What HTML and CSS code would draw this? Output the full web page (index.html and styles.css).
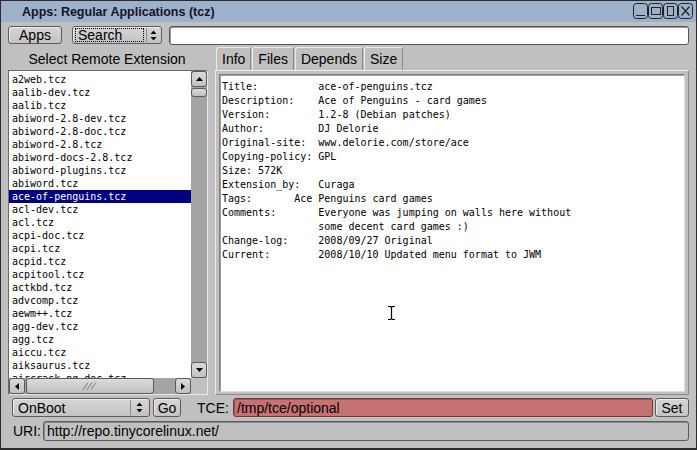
FILE: index.html
```html
<!DOCTYPE html>
<html>
<head>
<meta charset="utf-8">
<link rel="stylesheet" href="styles.css">
</head>
<body>
<div class="window">
  <div class="titlebar">
    <span class="title">Apps: Regular Applications (tcz)</span>
    <svg class="wbtns" width="61" height="16" viewBox="0 0 61 16">
      <g fill="none" stroke="#222" stroke-width="1">
        <rect x="0.5" y="0.5" width="14" height="15" rx="3"/>
        <rect x="15.5" y="0.5" width="14" height="15" rx="3"/>
        <rect x="30.5" y="0.5" width="14" height="15" rx="3"/>
        <rect x="45.5" y="0.5" width="14" height="15" rx="3"/>
        <path d="M3 12.5H12"/>
        <rect x="18.5" y="4.5" width="9" height="7"/>
        <rect x="34.5" y="3.5" width="6" height="9"/>
        <path d="M48.5 3.5L56.5 12.5M56.5 3.5L48.5 12.5" stroke-width="1.2"/>
      </g>
    </svg>
  </div>
  <div class="content">
    <div class="toolbar">
      <div class="btn apps-btn">Apps</div>
      <div class="choice search-choice">
        <span class="choice-label focused">Search</span>
        <span class="choice-arrows"><svg width="7" height="11" viewBox="0 0 7 11"><path d="M3.5 0.5L6.5 4H0.5Z M3.5 10.5L6.5 7H0.5Z" fill="#000"/></svg></span>
      </div>
      <div class="field search-field"></div>
    </div>
    <div class="mainrow">
      <div class="leftcol">
        <div class="list-label">Select Remote Extension</div>
        <div class="listbox">
          <div class="list-top">
            <div class="items">
              <div class="item">a2web.tcz</div>
              <div class="item">aalib-dev.tcz</div>
              <div class="item">aalib.tcz</div>
              <div class="item">abiword-2.8-dev.tcz</div>
              <div class="item">abiword-2.8-doc.tcz</div>
              <div class="item">abiword-2.8.tcz</div>
              <div class="item">abiword-docs-2.8.tcz</div>
              <div class="item">abiword-plugins.tcz</div>
              <div class="item">abiword.tcz</div>
              <div class="item selected">ace-of-penguins.tcz</div>
              <div class="item">acl-dev.tcz</div>
              <div class="item">acl.tcz</div>
              <div class="item">acpi-doc.tcz</div>
              <div class="item">acpi.tcz</div>
              <div class="item">acpid.tcz</div>
              <div class="item">acpitool.tcz</div>
              <div class="item">actkbd.tcz</div>
              <div class="item">advcomp.tcz</div>
              <div class="item">aewm++.tcz</div>
              <div class="item">agg-dev.tcz</div>
              <div class="item">agg.tcz</div>
              <div class="item">aiccu.tcz</div>
              <div class="item">aiksaurus.tcz</div>
              <div class="item">aircrack-ng-doc.tcz</div>
            </div>
            <div class="vscroll">
              <div class="sbtn"><svg width="9" height="6" viewBox="0 0 9 6"><path d="M4.5 1L8 5H1Z" fill="#000"/></svg></div>
              <div class="vthumb"></div>
              <div class="vtrough"></div>
              <div class="sbtn"><svg width="9" height="6" viewBox="0 0 9 6"><path d="M4.5 5L8 1H1Z" fill="#000"/></svg></div>
            </div>
          </div>
          <div class="list-bottom">
            <div class="hscroll">
              <div class="sbtn"><svg width="6" height="9" viewBox="0 0 6 9"><path d="M1 4.5L5 1V8Z" fill="#000"/></svg></div>
              <div class="hthumb"><svg width="16" height="8" viewBox="0 0 16 8"><path d="M1 7.5L6 0.5M5 7.5L10 0.5M9 7.5L14 0.5" stroke="#777" stroke-width="1" fill="none"/></svg></div>
              <div class="htrough"></div>
              <div class="sbtn"><svg width="6" height="9" viewBox="0 0 6 9"><path d="M5 4.5L1 1V8Z" fill="#000"/></svg></div>
            </div>
            <div class="corner"></div>
          </div>
        </div>
      </div>
      <div class="rightcol">
        <div class="tabs">
          <div class="tab active">Info</div>
          <div class="tab">Files</div>
          <div class="tab">Depends</div>
          <div class="tab">Size</div>
        </div>
        <div class="panel">
          <pre class="info">Title:          ace-of-penguins.tcz
Description:    Ace of Penguins - card games
Version:        1.2-8 (Debian patches)
Author:         DJ Delorie
Original-site:  www.delorie.com/store/ace
Copying-policy: GPL
Size: 572K
Extension_by:   Curaga
Tags:       Ace Penguins card games
Comments:       Everyone was jumping on walls here without
                some decent card games :)
Change-log:     2008/09/27 Original
Current:        2008/10/10 Updated menu format to JWM</pre>
        </div>
      </div>
    </div>
    <div class="row3">
      <div class="choice onboot-choice">
        <span class="choice-label">OnBoot</span>
        <span class="choice-arrows"><svg width="7" height="11" viewBox="0 0 7 11"><path d="M3.5 0.5L6.5 4H0.5Z M3.5 10.5L6.5 7H0.5Z" fill="#000"/></svg></span>
      </div>
      <div class="btn go-btn">Go</div>
      <span class="lbl tce-lbl">TCE:</span>
      <div class="field tce-field">/tmp/tce/optional</div>
      <div class="btn set-btn">Set</div>
    </div>
    <div class="row4">
      <span class="lbl uri-lbl">URI:</span>
      <div class="field uri-field">http://repo.tinycorelinux.net/</div>
    </div>
  </div>
  <svg class="ibeam" width="9" height="16" viewBox="0 0 9 16"><path d="M1 1.5H3.5L4.5 2.5L5.5 1.5H8M4.5 2.5V13.5M1 14.5H3.5L4.5 13.5L5.5 14.5H8" stroke="#000" stroke-width="1.2" fill="none"/></svg>
</div>
</body>
</html>
```

FILE: styles.css
```css
* { box-sizing: border-box; }
html, body { margin: 0; padding: 0; background: #c0c0c0; }
.window {
  position: relative;
  width: 697px;
  height: 450px;
  border: 1px solid #2c2c2c;
  border-bottom-width: 2px;
  background: #c0c0c0;
  font-family: "Liberation Sans", Arial, sans-serif;
  font-size: 14px;
  color: #000;
  overflow: hidden;
}
.titlebar {
  position: relative;
  height: 21px;
  background: #9db1ca;
  display: flex;
  align-items: center;
  padding-left: 21px;
}
.title {
  font-weight: bold;
  font-size: 12.5px;
  color: #141428;
  letter-spacing: 0;
}
.wbtns { position: absolute; left: 632px; top: 2px; }
.content {
  padding: 4px 7px 0 7px;
  display: flex;
  flex-direction: column;
}
.toolbar { display: flex; height: 18px; }
.btn {
  display: flex;
  align-items: center;
  justify-content: center;
  background: linear-gradient(#d6d6d6, #c3c3c3);
  border: 1px solid #5c5c5c;
  border-radius: 3px;
  box-shadow: inset 1px 1px #ececec;
  line-height: 1;
}
.apps-btn { width: 54px; }
.choice {
  display: flex;
  align-items: center;
  background: linear-gradient(#d6d6d6, #c3c3c3);
  border: 1px solid #5c5c5c;
  border-radius: 3px;
  box-shadow: inset 1px 1px #ececec;
  line-height: 1;
}
.search-choice { width: 90px; margin-left: 10px; padding: 1px 2px; }
.search-choice .choice-label {
  flex: 1;
  height: 14px;
  padding-left: 2px;
  display: flex;
  align-items: center;
  border: 1px dotted #000;
  margin-right: 2px;
}
.choice-arrows {
  display: flex;
  align-items: center;
  justify-content: center;
  width: 13px;
  height: 100%;
  border-left: 1px solid #8a8a8a;
}
.field {
  background: #fff;
  border: 1px solid #555;
  border-radius: 3px;
  box-shadow: inset 1px 1px #9a9a9a;
  display: flex;
  align-items: center;
  line-height: 1;
}
.search-field { flex: 1; margin-left: 7px; height: 19px; }
.mainrow { display: flex; margin-top: 3px; height: 348px; gap: 7px; }
.leftcol { width: 200px; display: flex; flex-direction: column; }
.list-label { height: 23px; display: flex; align-items: center; justify-content: center; padding-right: 2px; }
.listbox {
  height: 325px;
  border: 1px solid #6a6a6a;
  border-right-color: #e8e8e8;
  border-bottom-color: #e8e8e8;
  display: flex;
  flex-direction: column;
}
.list-top { display: flex; height: 307px; }
.items {
  width: 182px;
  background: #fff;
  overflow: hidden;
  padding-top: 2px;
  font-family: "DejaVu Sans Mono", monospace;
  font-size: 10px;
}
.item { height: 13px; line-height: 13px; padding-left: 3px; white-space: pre; }
.item.selected { background: #000080; color: #fff; }
.vscroll { width: 16px; display: flex; flex-direction: column; background: #a4a4a4; }
.sbtn {
  width: 16px;
  height: 16px;
  flex: none;
  display: flex;
  align-items: center;
  justify-content: center;
  background: linear-gradient(#dadada, #c2c2c2);
  border: 1px solid #5a5a5a;
  border-radius: 3px;
}
.vthumb {
  height: 9px;
  margin-top: 1px;
  background: linear-gradient(#dcdcdc, #c0c0c0);
  border: 1px solid #5a5a5a;
  border-radius: 3px;
}
.vtrough { flex: 1; }
.list-bottom { display: flex; height: 16px; }
.hscroll { width: 182px; display: flex; background: #a4a4a4; }
.hthumb {
  width: 128px;
  margin-left: 1px;
  display: flex;
  align-items: center;
  justify-content: center;
  background: linear-gradient(#dcdcdc, #c0c0c0);
  border: 1px solid #5a5a5a;
  border-radius: 3px;
}
.htrough { flex: 1; }
.corner { width: 16px; background: #c0c0c0; }
.rightcol { flex: 1; display: flex; flex-direction: column; }
.tabs { display: flex; height: 23px; padding-left: 1px; gap: 1px; }
.tab {
  height: 23px;
  padding: 0 5px;
  display: flex;
  align-items: center;
  border: 1px solid #8a8a8a;
  border-top-color: #ececec;
  border-left-color: #ececec;
  border-bottom: none;
  border-radius: 3px 3px 0 0;
  background: #c0c0c0;
  line-height: 1;
  margin-bottom: -1px;
  position: relative;
}
.tab.active { z-index: 1; }
.panel {
  height: 325px;
  border: 1px solid #8a8a8a;
  border-top-color: #ececec;
  border-left-color: #ececec;
  padding: 3px 3px 2px 3px;
  background: #c0c0c0;
}
.info {
  margin: 0;
  height: 100%;
  background: #fff;
  border: 1px solid #808080;
  border-right-color: #dcdcdc;
  border-bottom-color: #dcdcdc;
  box-shadow: inset 1px 1px #a0a0a0;
  padding: 5px 0 0 2px;
  font-family: "DejaVu Sans Mono", monospace;
  font-size: 10px;
  line-height: 14px;
  color: #000;
}
.row3 { display: flex; margin-top: 3px; height: 19px; padding-left: 4px; align-items: stretch; }
.onboot-choice { width: 138px; padding: 1px 2px 1px 5px; }
.onboot-choice .choice-label { flex: 1; }
.onboot-choice .choice-arrows { width: 17px; }
.go-btn { width: 28px; margin-left: 3px; }
.lbl { display: flex; align-items: center; }
.tce-lbl { margin-left: 16px; width: 36px; }
.tce-field {
  flex: 1;
  background: #c77272;
  border-color: #6e3a3a;
  box-shadow: inset 1px 1px #9a5656;
  padding-left: 3px;
}
.set-btn { width: 34px; margin-left: 2px; }
.row4 { display: flex; margin-top: 4px; height: 20px; padding-left: 5px; }
.uri-lbl { width: 30px; }
.uri-field {
  flex: 1;
  background: #c0c0c0;
  border-color: #5a5a5a;
  box-shadow: inset 1px 1px #8a8a8a;
  padding-left: 3px;
}
.ibeam { position: absolute; left: 386px; top: 304px; }
```
